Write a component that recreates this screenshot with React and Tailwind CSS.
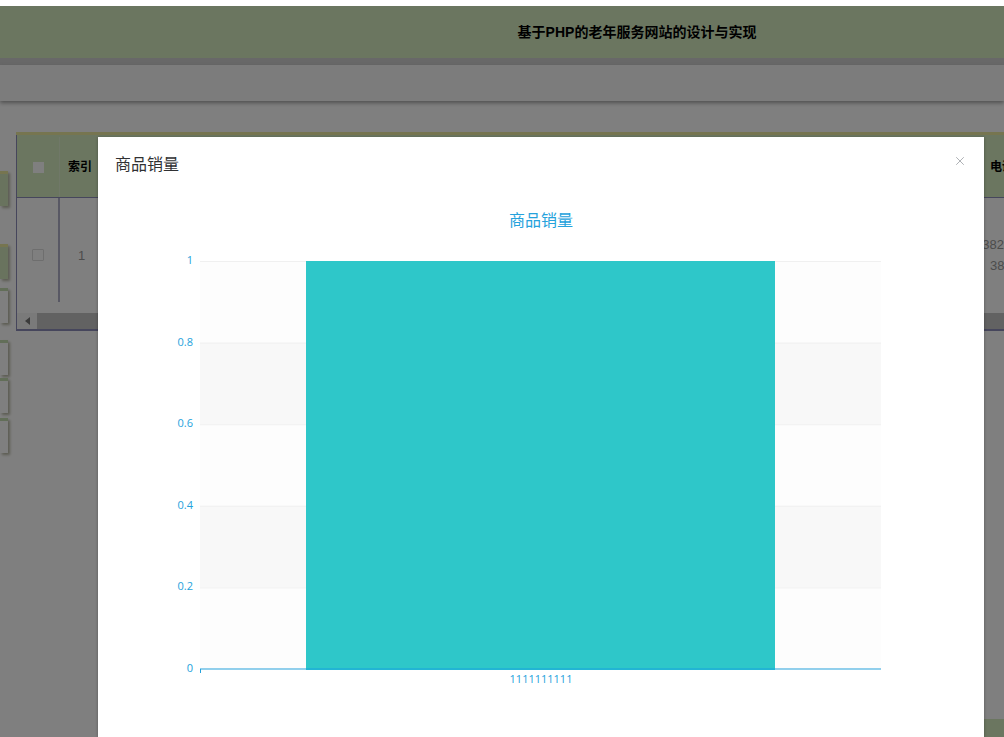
import { X } from 'lucide-react';

const FONT = "font-['Liberation_Sans','Noto_Sans_CJK_SC',sans-serif]";
const TICKS = ['1', '0.8', '0.6', '0.4', '0.2', '0'];
const BLUE = '#25a2dc';

function SideButton({ green, top }) {
  return (
    <div
      style={{ marginTop: top }}
      className={`h-[35px] w-[8px] border-t-[3px] shadow-[2px_2px_3px_#b8b8a4] ${green ? 'bg-[#d2e6bc] border-[#ecebA0]' : 'bg-white border-[#c4dcb0]'}`}
    />
  );
}

function SalesChart() {
  const left = 102;
  const right = 783;
  const top = 65;
  const step = 81.6;
  return (
    <svg width="886" height="600" className="block">
      <text x="443" y="30" textAnchor="middle" fontSize="16" fill={BLUE} fontFamily="'Liberation Sans','Noto Sans CJK SC',sans-serif">
        商品销量
      </text>
      {[0, 1, 2, 3, 4].map((i) => (
        <rect key={i} x={left} y={top + i * step} width={right - left} height={step} fill={i % 2 ? '#f8f8f8' : '#fdfdfd'} />
      ))}
      {[0, 1, 2, 3, 4].map((i) => (
        <line key={i} x1={left} x2={right} y1={top + i * step + 0.5} y2={top + i * step + 0.5} stroke="#f0f0f0" />
      ))}
      <rect x="208" y={top} width="469" height="408" fill="#2ec7c9" />
      <line x1={left} x2={right} y1="473" y2="473" stroke={BLUE} strokeOpacity="0.5" strokeWidth="2" />
      <line x1="208" x2="677" y1="473" y2="473" stroke="#22b4d4" strokeWidth="2" />
      <line x1={left + 0.5} x2={left + 0.5} y1="473" y2="477" stroke={BLUE} />
      {TICKS.map((t, i) => (
        <text key={t} x="95" y={top + i * step + 3} textAnchor="end" fontSize="11" fill={BLUE} fontFamily="'Open Sans',sans-serif">
          {t}
        </text>
      ))}
      <text x="443" y="487" textAnchor="middle" fontSize="11" fill={BLUE} fontFamily="'Open Sans',sans-serif">
        1111111111
      </text>
    </svg>
  );
}

export default function App() {
  return (
    <div className={`relative h-[737px] w-[1004px] overflow-hidden bg-white ${FONT}`}>
      {/* page behind the dialog */}
      <div className="pt-[6px]">
        <header className="flex h-[52px] items-center justify-center bg-[#d6ecc0] pl-[270px] text-sm font-bold text-black">
          基于PHP的老年服务网站的设计与实现
        </header>
        <div className="h-[7px] bg-[#d0d0d0]" />
        <nav className="h-[36px] bg-[#f8f8f8] shadow-[0_2px_4px_#a0a0a0]" />
        <div className="mt-[31px] flex">
          <div className="mr-[8px] w-[8px] pt-[39px]">
            <SideButton green top={0} />
            <SideButton green top={38} />
            <SideButton top={9} />
            <SideButton top={17} />
            <SideButton top={3} />
            <SideButton top={5} />
          </div>
          <div className="w-[1100px] border-t-[3px] border-[#ecebA0]">
            <div className="border-b-2 border-l border-[#8c8cb8]">
              <div className="flex h-[63px] items-center border-b border-[#8c8cb8] bg-[#d6ecc0] pt-[2px] text-xs font-bold text-black">
                <div className="flex h-full w-[43px] items-center justify-center border-r border-[#e0f0d0]">
                  <div className="h-[11px] w-[11px] bg-white" />
                </div>
                <div className="w-[40px] pl-[8px]">索引</div>
                <div className="ml-[890px]">电话</div>
              </div>
              <div className="flex h-[115px] items-center text-[13px] text-[#999]">
                <div className="flex h-full w-[43px] flex-col">
                  <div className="flex h-[104px] items-center justify-center border-r-2 border-[#b0b0c8] pt-[10px]">
                    <div className="h-[12px] w-[12px] rounded-[1px] border border-[#ddd] bg-white" />
                  </div>
                </div>
                <div className="w-[40px] pl-[18px]">1</div>
                <div className="mb-[2px] ml-[875px] leading-[21px]">
                  <div>13823888881</div>
                  <div className="pl-[15px]">38</div>
                </div>
              </div>
              <div className="flex h-[16px] bg-[#f4f4f4]">
                <div className="flex w-[20px] items-center justify-center">
                  <div className="h-0 w-0 border-y-[4px] border-r-[5px] border-y-transparent border-r-[#777]" />
                </div>
                <div className="flex-1 bg-[#c4c4c4]" />
              </div>
            </div>
          </div>
        </div>
      </div>

      {/* dialog */}
      <div className="absolute inset-x-0 bottom-0 top-[6px] bg-black/50" />
      <div className="absolute bottom-0 right-0 h-[18px] w-[20px] bg-[#6b7660]" />
      <div className="absolute bottom-0 left-[98px] top-[137px] w-[886px] bg-white shadow-[0_1px_3px_rgba(0,0,0,0.3)]">
        <div className="flex items-start justify-between pl-[17px] pr-[17px] pt-[17px]">
          <span className="text-base leading-[22px] text-[#303133]">商品销量</span>
          <X className="h-[14px] w-[14px] text-[#909399]" strokeWidth={1.25} />
        </div>
        <div className="absolute left-0 top-[59px]">
          <SalesChart />
        </div>
      </div>
    </div>
  );
}
